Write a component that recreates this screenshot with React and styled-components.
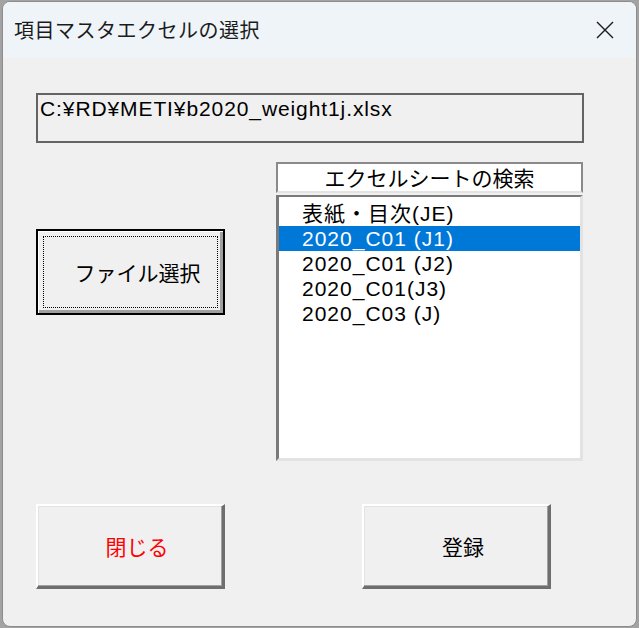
import React from "react";
import styled, { createGlobalStyle } from "styled-components";

const GlobalStyle = createGlobalStyle`
  html, body {
    margin: 0;
    padding: 0;
    background: #a3a3a3;
  }
`;

const Window = styled.div`
  width: 633px;
  height: 624px;
  margin: 1px 0 0 2px;
  border: 1px solid #8c8c8c;
  border-radius: 8px;
  overflow: hidden;
  display: flex;
  flex-direction: column;
  background: #f0f0f0;
  font-family: "Noto Sans CJK JP", "Noto Sans", sans-serif;
  color: #000;
`;

const TitleBar = styled.div`
  height: 56px;
  flex: none;
  display: flex;
  align-items: center;
  justify-content: space-between;
  padding: 0 22px 0 11px;
  background: #eff4f9;
`;

const Title = styled.div`
  font-size: 20px;
  letter-spacing: 0.5px;
  color: #1b1b1b;
  margin-top: -2px;
`;

const Body = styled.div`
  flex: 1;
  display: flex;
  flex-direction: column;
  padding: 35px 0 0 33px;
`;

const PathBox = styled.div`
  width: 542px;
  height: 46px;
  border: 2px solid #646464;
  font-family: "Liberation Sans", "Noto Sans CJK JP", sans-serif;
  font-size: 21px;
  letter-spacing: 0.9px;
  line-height: 28px;
  padding: 0 0 0 2px;
`;

const Middle = styled.div`
  display: flex;
  gap: 51px;
  margin-top: 19px;
`;

const LeftCol = styled.div`
  padding-top: 67px;
`;

const RightCol = styled.div`
  display: flex;
  flex-direction: column;
  gap: 2px;
`;

const Button = styled.button`
  width: 189px;
  height: 85px;
  box-sizing: border-box;
  background: #f0f0f0;
  font-family: "Noto Sans CJK JP", sans-serif;
  font-size: 21px;
  color: ${(p) => p.color || "#000"};
  padding: 0 0 0 14px;
  display: flex;
  align-items: center;
  justify-content: center;
  border-style: solid;
  border-width: 2px 3px 3px 2px;
  border-color: #fff #6e6e6e #6e6e6e #fff;
  box-shadow: inset -1px -1px 0 #a0a0a0, inset 1px 1px 0 #e3e3e3;
`;

const DefaultButton = styled(Button)`
  height: 86px;
  border: 2px solid #000;
  box-shadow: inset 1px 1px 0 #fff, inset -3px -3px 0 #a0a0a0;
  position: relative;
`;

const FocusRect = styled.span`
  position: absolute;
  inset: 5px;
  border: 1px dotted #000;
`;

const SearchLabel = styled.div`
  width: 307px;
  height: 31px;
  box-sizing: border-box;
  background: #fff;
  border-style: solid;
  border-width: 2px;
  border-color: #8a8a8a #8a8a8a #e3e3e3 #8a8a8a;
  font-size: 21px;
  line-height: 26px;
  text-align: center;
`;

const ListBox = styled.div`
  width: 307px;
  height: 266px;
  box-sizing: border-box;
  background: #fff;
  border-style: solid;
  border-width: 2px 3px 3px 3px;
  border-color: #7a7a7a #e3e3e3 #e3e3e3 #7a7a7a;
  padding-top: 4px;
`;

const ListItem = styled.div`
  height: 25px;
  line-height: 25px;
  font-size: 21px;
  letter-spacing: 1px;
  padding-left: 23px;
  white-space: nowrap;
  background: ${(p) => (p.selected ? "#0078d7" : "transparent")};
  color: ${(p) => (p.selected ? "#fff" : "#000")};
  font-family: "Liberation Sans", "Noto Sans CJK JP", sans-serif;
`;

const Footer = styled.div`
  display: flex;
  gap: 137px;
  margin-top: 43px;
`;

const sheets = [
  "表紙・目次(JE)",
  "2020_C01 (J1)",
  "2020_C01 (J2)",
  "2020_C01(J3)",
  "2020_C03 (J)",
];

export default function App() {
  return (
    <>
      <GlobalStyle />
      <Window>
        <TitleBar>
          <Title>項目マスタエクセルの選択</Title>
          <svg width="18" height="18" viewBox="0 0 18 18">
            <path d="M1 1L17 17M17 1L1 17" stroke="#1b1b1b" strokeWidth="1.4" />
          </svg>
        </TitleBar>
        <Body>
          <PathBox>C:¥RD¥METI¥b2020_weight1j.xlsx</PathBox>
          <Middle>
            <LeftCol>
              <DefaultButton>
                <FocusRect />
                ファイル選択
              </DefaultButton>
            </LeftCol>
            <RightCol>
              <SearchLabel>エクセルシートの検索</SearchLabel>
              <ListBox>
                {sheets.map((s, i) => (
                  <ListItem key={s} selected={i === 1}>
                    {s}
                  </ListItem>
                ))}
              </ListBox>
            </RightCol>
          </Middle>
          <Footer>
            <Button color="#ff0000">閉じる</Button>
            <Button>登録</Button>
          </Footer>
        </Body>
      </Window>
    </>
  );
}
